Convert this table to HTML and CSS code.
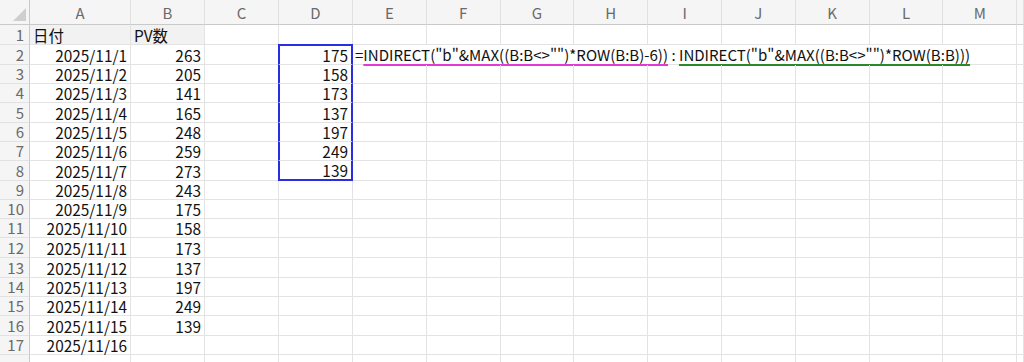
FILE: index.html
```html
<!DOCTYPE html>
<html lang="ja">
<head>
<meta charset="utf-8">
<link rel="stylesheet" href="styles.css">
</head>
<body>
<div class="sheet">
  <div class="hd corner"><span class="tri"></span></div>
  <div class="hd col">A</div><div class="hd col">B</div><div class="hd col">C</div><div class="hd col">D</div><div class="hd col">E</div><div class="hd col">F</div><div class="hd col">G</div><div class="hd col">H</div><div class="hd col">I</div><div class="hd col">J</div><div class="hd col">K</div><div class="hd col">L</div><div class="hd col">M</div><div class="hd col"></div>

  <div class="rh">1</div><div class="c shade l">日付</div><div class="c shade l">PV数</div><div class="c"></div><div class="c"></div><div class="c"></div><div class="c"></div><div class="c"></div><div class="c"></div><div class="c"></div><div class="c"></div><div class="c"></div><div class="c"></div><div class="c"></div><div class="c"></div>

  <div class="rh">2</div><div class="c">2025/11/1</div><div class="c">263</div><div class="c"></div><div class="c sel sel-top">175</div><div class="c formula"><span class="eq">=</span><span class="u-pink">INDIRECT("b"&amp;MAX((B:B&lt;&gt;"")*ROW(B:B)-6))</span><span class="sep"> : </span><span class="u-green">INDIRECT("b"&amp;MAX((B:B&lt;&gt;"")*ROW(B:B)))</span></div><div class="c"></div>

  <div class="rh">3</div><div class="c">2025/11/2</div><div class="c">205</div><div class="c"></div><div class="c sel">158</div><div class="c"></div><div class="c"></div><div class="c"></div><div class="c"></div><div class="c"></div><div class="c"></div><div class="c"></div><div class="c"></div><div class="c"></div><div class="c"></div>

  <div class="rh">4</div><div class="c">2025/11/3</div><div class="c">141</div><div class="c"></div><div class="c sel">173</div><div class="c"></div><div class="c"></div><div class="c"></div><div class="c"></div><div class="c"></div><div class="c"></div><div class="c"></div><div class="c"></div><div class="c"></div><div class="c"></div>

  <div class="rh">5</div><div class="c">2025/11/4</div><div class="c">165</div><div class="c"></div><div class="c sel">137</div><div class="c"></div><div class="c"></div><div class="c"></div><div class="c"></div><div class="c"></div><div class="c"></div><div class="c"></div><div class="c"></div><div class="c"></div><div class="c"></div>

  <div class="rh">6</div><div class="c">2025/11/5</div><div class="c">248</div><div class="c"></div><div class="c sel">197</div><div class="c"></div><div class="c"></div><div class="c"></div><div class="c"></div><div class="c"></div><div class="c"></div><div class="c"></div><div class="c"></div><div class="c"></div><div class="c"></div>

  <div class="rh">7</div><div class="c">2025/11/6</div><div class="c">259</div><div class="c"></div><div class="c sel">249</div><div class="c"></div><div class="c"></div><div class="c"></div><div class="c"></div><div class="c"></div><div class="c"></div><div class="c"></div><div class="c"></div><div class="c"></div><div class="c"></div>

  <div class="rh">8</div><div class="c">2025/11/7</div><div class="c">273</div><div class="c"></div><div class="c sel sel-bot">139</div><div class="c"></div><div class="c"></div><div class="c"></div><div class="c"></div><div class="c"></div><div class="c"></div><div class="c"></div><div class="c"></div><div class="c"></div><div class="c"></div>

  <div class="rh">9</div><div class="c">2025/11/8</div><div class="c">243</div><div class="c"></div><div class="c"></div><div class="c"></div><div class="c"></div><div class="c"></div><div class="c"></div><div class="c"></div><div class="c"></div><div class="c"></div><div class="c"></div><div class="c"></div><div class="c"></div>

  <div class="rh">10</div><div class="c">2025/11/9</div><div class="c">175</div><div class="c"></div><div class="c"></div><div class="c"></div><div class="c"></div><div class="c"></div><div class="c"></div><div class="c"></div><div class="c"></div><div class="c"></div><div class="c"></div><div class="c"></div><div class="c"></div>

  <div class="rh">11</div><div class="c">2025/11/10</div><div class="c">158</div><div class="c"></div><div class="c"></div><div class="c"></div><div class="c"></div><div class="c"></div><div class="c"></div><div class="c"></div><div class="c"></div><div class="c"></div><div class="c"></div><div class="c"></div><div class="c"></div>

  <div class="rh">12</div><div class="c">2025/11/11</div><div class="c">173</div><div class="c"></div><div class="c"></div><div class="c"></div><div class="c"></div><div class="c"></div><div class="c"></div><div class="c"></div><div class="c"></div><div class="c"></div><div class="c"></div><div class="c"></div><div class="c"></div>

  <div class="rh">13</div><div class="c">2025/11/12</div><div class="c">137</div><div class="c"></div><div class="c"></div><div class="c"></div><div class="c"></div><div class="c"></div><div class="c"></div><div class="c"></div><div class="c"></div><div class="c"></div><div class="c"></div><div class="c"></div><div class="c"></div>

  <div class="rh">14</div><div class="c">2025/11/13</div><div class="c">197</div><div class="c"></div><div class="c"></div><div class="c"></div><div class="c"></div><div class="c"></div><div class="c"></div><div class="c"></div><div class="c"></div><div class="c"></div><div class="c"></div><div class="c"></div><div class="c"></div>

  <div class="rh">15</div><div class="c">2025/11/14</div><div class="c">249</div><div class="c"></div><div class="c"></div><div class="c"></div><div class="c"></div><div class="c"></div><div class="c"></div><div class="c"></div><div class="c"></div><div class="c"></div><div class="c"></div><div class="c"></div><div class="c"></div>

  <div class="rh">16</div><div class="c">2025/11/15</div><div class="c">139</div><div class="c"></div><div class="c"></div><div class="c"></div><div class="c"></div><div class="c"></div><div class="c"></div><div class="c"></div><div class="c"></div><div class="c"></div><div class="c"></div><div class="c"></div><div class="c"></div>

  <div class="rh">17</div><div class="c">2025/11/16</div><div class="c"></div><div class="c"></div><div class="c"></div><div class="c"></div><div class="c"></div><div class="c"></div><div class="c"></div><div class="c"></div><div class="c"></div><div class="c"></div><div class="c"></div><div class="c"></div><div class="c"></div>

  <div class="rh"></div><div class="c"></div><div class="c"></div><div class="c"></div><div class="c"></div><div class="c"></div><div class="c"></div><div class="c"></div><div class="c"></div><div class="c"></div><div class="c"></div><div class="c"></div><div class="c"></div><div class="c"></div><div class="c"></div>
</div>
</body>
</html>
```

FILE: styles.css
```css
html, body {
  margin: 0;
  padding: 0;
  background: #ffffff;
  overflow: hidden;
}

.sheet {
  display: grid;
  width: 1024px;
  height: 362px;
  overflow: hidden;
  grid-template-columns: 30px 101px 74px 74px 74px repeat(9, 73.8px) 1fr;
  grid-template-rows: 25px 20px 20px 19px 19px 20px 19px 19px 20px 19px 19px 19px 20px 20px 19px 19px 20px 19px 20px;
  font-family: "Noto Sans CJK JP", "Noto Sans", sans-serif;
  font-size: 15.4px;
  color: #111111;
}

.hd {
  box-sizing: border-box;
  background: #f5f5f5;
  border-bottom: 1px solid #c9c9c9;
  border-right: 1px solid #e0e0e0;
  color: #6a6a6a;
  font-size: 15px;
  display: flex;
  align-items: center;
  justify-content: center;
  line-height: 1;
  padding-top: 1px;
}

.corner {
  position: relative;
  border-right: 1px solid #c9c9c9;
}

.tri {
  position: absolute;
  right: 3px;
  bottom: 3px;
  width: 0;
  height: 0;
  border-left: 13px solid transparent;
  border-bottom: 13px solid #cfcfcf;
}

.rh {
  box-sizing: border-box;
  background: #f5f5f5;
  border-right: 1px solid #c9c9c9;
  border-bottom: 1px solid #e2e2e2;
  color: #6a6a6a;
  font-size: 15px;
  display: flex;
  align-items: flex-end;
  justify-content: flex-end;
  padding-right: 5px;
  line-height: 18px;
}

.c {
  box-sizing: border-box;
  border-right: 1px solid #e3e3e3;
  border-bottom: 1px solid #e3e3e3;
  display: flex;
  align-items: flex-end;
  justify-content: flex-end;
  padding-right: 3px;
  line-height: 18px;
  white-space: nowrap;
  min-width: 0;
}

.c.l {
  justify-content: flex-start;
  padding-left: 3px;
}

.c.shade {
  background: #f2f2f2;
}

.sel {
  border-left: 2px solid #2a2ee0;
  border-right: 2px solid #2a2ee0;
  margin-left: -1px;
}

.sel-top {
  border-top: 2px solid #2a2ee0;
  margin-top: -1px;
}

.sel-bot {
  border-bottom: 2px solid #2a2ee0;
}

.formula {
  grid-column: span 9;
  justify-content: flex-start;
  padding-left: 2px;
  padding-right: 0;
  background: #ffffff;
  font-size: 15.05px;
}

.u-pink {
  text-decoration: underline;
  text-decoration-color: #e23ad8;
  text-decoration-thickness: 2px;
  text-underline-offset: 3px;
}

.u-green {
  text-decoration: underline;
  text-decoration-color: #2a8a2a;
  text-decoration-thickness: 2px;
  text-underline-offset: 3px;
}

.sep {
  white-space: pre;
}
```
